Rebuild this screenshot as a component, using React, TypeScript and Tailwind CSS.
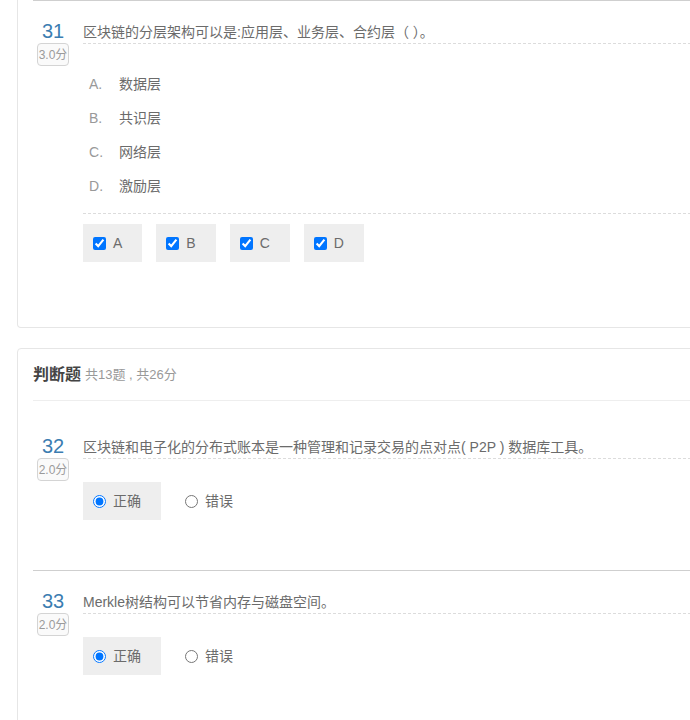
import type { ReactNode } from "react";

const font = "font-['Liberation_Sans','Noto_Sans_CJK_SC',sans-serif]";

type Option = { key: string; text: string };

const options: Option[] = [
  { key: "A", text: "数据层" },
  { key: "B", text: "共识层" },
  { key: "C", text: "网络层" },
  { key: "D", text: "激励层" },
];

function QuestionBlock({
  num,
  score,
  title,
  first,
  children,
}: {
  num: number;
  score: string;
  title: string;
  first?: boolean;
  children: ReactNode;
}) {
  return (
    <div
      className={
        first
          ? "mt-[14px] flex border-t border-transparent pt-[20px] pb-[50px]"
          : "flex border-t border-[#cfcfcf] pt-[20px] pb-[50px]"
      }
    >
      <div className="flex w-[40px] shrink-0 flex-col items-center">
        <div className="text-[20px] leading-[20px] text-[#3b7db1]">{num}</div>
        <div className="mt-[2px] flex h-[23px] items-center rounded-[4px] border border-[#d4d4d4] bg-[#fafafa] px-[1px] text-[12px] text-[#9a9a9a]">
          {score}
        </div>
      </div>
      <div className="ml-[10px] flex-1">
        <div className="border-b border-dashed border-[#dcdcdc] text-[14px] leading-[22px] text-[#6b6b6b]">
          {title}
        </div>
        {children}
      </div>
    </div>
  );
}

function Choice({ type, label, checked }: { type: "checkbox" | "radio"; label: string; checked: boolean }) {
  return (
    <label
      className={
        checked
          ? "mr-[14px] flex h-[38px] items-center bg-[#eeeeee] pr-[20px] pl-[10px]"
          : "mr-[14px] flex h-[38px] items-center pr-[20px] pl-[10px]"
      }
    >
      <input type={type} checked={checked} readOnly className="m-0 h-[13px] w-[13px]" />
      <span className="ml-[7px] text-[14px] text-[#6b6b6b]">{label}</span>
    </label>
  );
}

export default function App() {
  return (
    <div className={`${font} w-[690px] overflow-hidden bg-white`}>
      <div className="ml-[17px] w-[720px]">
        <div className="rounded-b-[4px] border border-t-0 border-[#e6e6e6] px-[15px] pb-[15px]">
          <QuestionBlock num={31} score="3.0分" title="区块链的分层架构可以是:应用层、业务层、合约层（ ）。">
            <div className="mt-[23px] border-b border-dashed border-[#dcdcdc] pb-[10px] pl-[6px]">
              {options.map((o) => (
                <div key={o.key} className="flex h-[34px] items-center text-[14px]">
                  <span className="w-[30px] text-[#999]">{o.key}.</span>
                  <span className="text-[#6b6b6b]">{o.text}</span>
                </div>
              ))}
            </div>
            <div className="mt-[10px] flex">
              {options.map((o) => (
                <Choice key={o.key} type="checkbox" label={o.key} checked />
              ))}
            </div>
          </QuestionBlock>
        </div>

        <div className="mt-[20px] rounded-[4px] border border-[#e6e6e6] px-[15px] pb-[15px]">
          <div className="flex h-[52px] items-center border-b border-[#eeeeee] pt-px">
            <span className="text-[16px] font-bold text-[#444]">判断题</span>
            <span className="ml-[4px] text-[13px] text-[#999]">共13题 , 共26分</span>
          </div>
          <QuestionBlock
            first
            num={32}
            score="2.0分"
            title="区块链和电子化的分布式账本是一种管理和记录交易的点对点( P2P ) 数据库工具。"
          >
            <div className="mt-[23px] flex">
              <Choice type="radio" label="正确" checked />
              <Choice type="radio" label="错误" checked={false} />
            </div>
          </QuestionBlock>
          <QuestionBlock num={33} score="2.0分" title="Merkle树结构可以节省内存与磁盘空间。">
            <div className="mt-[23px] flex">
              <Choice type="radio" label="正确" checked />
              <Choice type="radio" label="错误" checked={false} />
            </div>
          </QuestionBlock>
        </div>
      </div>
    </div>
  );
}
